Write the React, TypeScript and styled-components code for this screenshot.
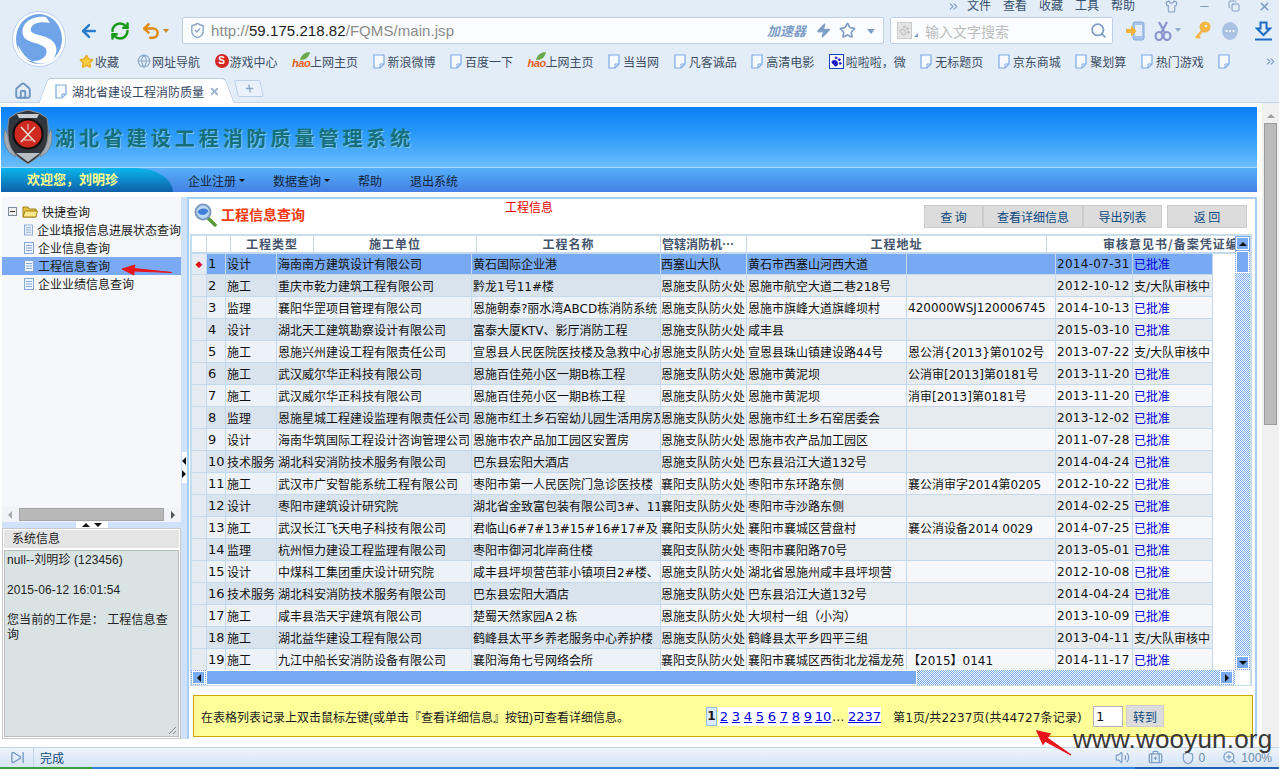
import React from 'react';
import styled, { createGlobalStyle, css } from 'styled-components';
import { ArrowLeft, RefreshCw, Undo2, Star, Globe, ShieldCheck, Zap, Search, Home, X, Plus, ChevronsRight, Shirt, Minus, Copy, Volume2, BriefcaseMedical, Shield, ZoomIn, SkipForward, PawPrint } from 'lucide-react';

const SANS = `"DejaVu Sans", "Noto Sans CJK SC", sans-serif`;
const UI = `"Liberation Sans", "Noto Sans CJK SC", sans-serif`;

const Global = createGlobalStyle`
  html, body { margin: 0; padding: 0; background: #fff; }
  body { font: 12px ${UI}; color: #222; }
  * { box-sizing: border-box; }
`;

const checker = css`
  background: repeating-conic-gradient(#78aaf3 0 25%, #fff 0 50%) 0 0 / 2px 2px;
`;

const Page = styled.div`
  position: relative;
  width: 1279px;
  height: 769px;
  overflow: hidden;
  display: flex;
  flex-direction: column;
`;

/* ---------- browser chrome ---------- */
const Chrome = styled.header`
  height: 103px;
  flex: none;
  background: #e3edf8;
  border-bottom: 1px solid #c3d4ea;
  display: flex;
  flex-direction: column;
`;
const ChromeTop = styled.div`
  height: 78px;
  display: grid;
  grid-template-columns: 72px minmax(0, 1fr);
  grid-template-rows: 17px 27px 28px;
`;
const LogoCell = styled.div`
  grid-row: 1 / 4;
  padding: 11px 0 0 12px;
`;
const MenuStrip = styled.div`
  display: flex;
  align-items: flex-start;
  justify-content: flex-end;
  color: #36506f;
  height: 17px;
  overflow: hidden;
  padding-right: 8px;
`;
const MenuText = styled.span`
  font-size: 12px;
  line-height: 12px;
  margin-right: 12px;
`;
const WinGlyph = styled.span<{ $gap: number }>`
  display: inline-flex;
  margin-left: ${p => p.$gap}px;
  color: #7f9dc2;
`;
const AddressRow = styled.div`
  display: flex;
  align-items: stretch;
`;
const NavIcons = styled.div`
  width: 110px;
  display: flex;
  align-items: center;
  padding-left: 7px;
  gap: 11px;
`;
const Caret = styled.span`
  width: 0;
  height: 0;
  border: 3px solid transparent;
  border-top: 4px solid #c9892f;
  margin: 3px 0 0 -9px;
`;
const AddressBox = styled.div`
  width: 702px;
  background: #fbfcfe;
  border: 1px solid #c0d0e4;
  border-radius: 2px;
  display: flex;
  align-items: center;
  padding: 0 8px 0 6px;
  font-family: "Liberation Sans", sans-serif;
  font-size: 15px;
  color: #8b8b8b;
`;
const Host = styled.span`
  color: #1c1c1c;
`;
const Url = styled.span`
  margin-left: 5px;
  flex: 1;
  white-space: nowrap;
  letter-spacing: 0.06px;
`;
const Accel = styled.span`
  font: italic bold 13px ${UI};
  color: #7d9ec6;
  margin-right: 10px;
`;
const AddressTail = styled.span`
  display: inline-flex;
  align-items: center;
  gap: 8px;
  color: #7d9ec6;
`;
const SmallDown = styled.span`
  width: 0;
  height: 0;
  border: 4px solid transparent;
  border-top: 5px solid #7d9ec6;
  margin: 5px 0 0 3px;
`;
const SearchBox = styled.div`
  width: 223px;
  margin-left: 6px;
  background: #fbfcfe;
  border: 1px solid #c0d0e4;
  border-radius: 2px;
  display: flex;
  align-items: center;
  padding: 0 5px 0 6px;
  color: #bcbcbc;
  font-size: 14px;
`;
const SearchThumb = styled.span`
  width: 15px;
  height: 17px;
  background: #e4e4e4;
  border: 1px solid #ccc;
  display: inline-flex;
  align-items: center;
  justify-content: center;
  color: #b5b5b5;
`;
const CornerTick = styled.span`
  width: 0;
  height: 0;
  margin: 9px 0 0 2px;
  border-left: 4px solid transparent;
  border-bottom: 4px solid #7d9ec6;
`;
const SearchHint = styled.span`
  flex: 1;
  margin-left: 7px;
`;
const ToolIcons = styled.div`
  display: flex;
  align-items: center;
  padding-left: 13px;
`;
const ToolIcon = styled.span<{ $w: number }>`
  width: ${p => p.$w}px;
  display: inline-flex;
  align-items: center;
`;
const ToolCaret = styled.span`
  width: 0;
  height: 0;
  margin: 2px 0 0 3px;
  border: 3px solid transparent;
  border-top: 4px solid #8fa9c8;
`;
const BookmarkRow = styled.nav`
  display: flex;
  align-items: center;
  padding: 6px 0 0 7px;
  gap: 14.5px;
  font-size: 12px;
  color: #3c4d63;
  white-space: nowrap;
  min-width: 0;
  overflow: hidden;
`;
const Bookmark = styled.span<{ $mr?: number }>`
  display: inline-flex;
  align-items: center;
  gap: 1px;
  margin-right: ${p => p.$mr ?? 0}px;
`;
const DocMark = styled.span`
  display: inline-flex;
  margin-right: 2px;
`;
const Hao = styled.span`
  position: relative;
  font: italic bold 11px "Liberation Sans", sans-serif;
  color: #e8601c;
  width: 17px;
  height: 14px;
  display: inline-flex;
  align-items: flex-end;
  line-height: 10px;
  letter-spacing: -0.5px;
`;
const Leaf = styled.svg`
  position: absolute;
  right: -1px;
  top: -2px;
`;
const SogouBookmark = styled.span`
  width: 14px;
  height: 14px;
  border-radius: 50%;
  background: #d22a22;
  color: #fff;
  font: bold 10px/14px "Liberation Sans", sans-serif;
  text-align: center;
`;
const BaiduIcon = styled.span`
  width: 15px;
  height: 15px;
  border: 1px solid #1a3fb8;
  background: #fff;
  color: #1c1cc8;
  display: inline-flex;
  align-items: center;
  justify-content: center;
  margin-right: 1px;
`;
const TabRow = styled.div`
  flex: 1;
  display: flex;
  align-items: flex-end;
  padding-left: 14px;
  position: relative;
`;
const HomeGlyph = styled.span`
  width: 18px;
  height: 22px;
  color: #6e97c4;
  display: inline-flex;
  align-items: center;
`;
const Tab = styled.div`
  position: relative;
  margin-left: 17px;
  width: 175px;
  height: 25px;
  background: #fff;
  border-top: 1px solid #b6cbe5;
  display: flex;
  align-items: center;
  gap: 5px;
  padding-left: 6px;
  color: #33465e;
  top: 1px;
  white-space: nowrap;
  &::before, &::after {
    content: '';
    position: absolute;
    top: -1px;
    bottom: 0;
    width: 14px;
    background: #fff;
    border-top: 1px solid #b6cbe5;
  }
  &::before { left: -6px; transform: skewX(-20deg); border-left: 1px solid #b6cbe5; border-radius: 4px 0 0 0; }
  &::after { right: -6px; transform: skewX(20deg); border-right: 1px solid #b6cbe5; border-radius: 0 4px 0 0; }
`;
const TabInner = styled.span`
  position: relative;
  z-index: 1;
  display: inline-flex;
  align-items: center;
  gap: 5px;
`;
const TabTitle = styled.span`
  width: 132px;
  overflow: hidden;
  font-size: 12px;
`;
const NewTab = styled.div`
  margin: 0 0 5px 12px;
  width: 26px;
  height: 17px;
  transform: skewX(12deg);
  border: 1px solid #bcd0e8;
  border-radius: 2px;
  background: #e9f1fa;
  color: #8fa9c8;
  display: flex;
  align-items: center;
  justify-content: center;
`;

/* ---------- application ---------- */
const Body = styled.main`
  flex: 1;
  display: flex;
  min-height: 0;
  background: #fff;
`;
const AppFrame = styled.div`
  width: 1262px;
  padding-top: 4px;
  display: flex;
  flex-direction: column;
`;
const PageScroll = styled.aside`
  width: 17px;
  background: #f0f0f0;
  display: flex;
  flex-direction: column;
  align-items: center;
  padding-top: 7px;
`;
const PageUp = styled.span`
  width: 0;
  height: 0;
  border: 4px solid transparent;
  border-bottom: 4px solid #a0a0a0;
`;
const PageThumb = styled.span`
  margin-top: 5px;
  width: 13px;
  height: 302px;
  background: #bbb;
  border: 1px solid #9c9c9c;
`;
const Banner = styled.div`
  height: 60px;
  margin: 0 5px 0 1px;
  background: linear-gradient(#0a80f8 0%, #2a9af9 45%, #6bbdfc 100%);
  display: flex;
  align-items: center;
  padding-left: 2px;
`;
const BannerTitle = styled.h1`
  margin: 0 0 0 2px;
  font: bold 20px "Noto Sans CJK SC", sans-serif;
  letter-spacing: 3.95px;
  color: #14707c;
  text-shadow: 1px 1px 0 #7cc4e8;
  white-space: nowrap;
`;
const NavBar = styled.div`
  height: 25px;
  margin: 0 5px 0 1px;
  border-top: 1px solid #a8dcff;
  background: linear-gradient(#55b0fa, #4580e4);
  display: flex;
  align-items: center;
`;
const Welcome = styled.div`
  width: 172px;
  height: 24px;
  background: linear-gradient(#0ab6ec, #0f5fa8);
  border-top-right-radius: 38px 24px;
  color: #ffff8c;
  font-weight: bold;
  font-size: 13px;
  line-height: 24px;
  padding-left: 26px;
  margin-right: 15px;
`;
const NavItem = styled.span`
  display: inline-flex;
  align-items: center;
  gap: 3px;
  margin-right: 28px;
  color: #10233c;
  font-size: 12px;
`;
const NavCaret = styled.i`
  width: 0;
  height: 0;
  border: 3px solid transparent;
  border-top: 3px solid #111;
  margin-top: 3px;
`;
const Workspace = styled.div`
  flex: 1;
  min-height: 0;
  padding: 5px 5px 8px 2px;
  display: flex;
`;
const LeftCol = styled.div`
  width: 179px;
  flex: none;
  display: flex;
  flex-direction: column;
`;
const TreePanel = styled.div`
  height: 325px;
  flex: none;
  background: #f6f7fb;
  display: flex;
  flex-direction: column;
`;
const Tree = styled.ul`
  flex: 1;
  margin: 0;
  padding: 6px 0 0;
  list-style: none;
`;
const TreeRow = styled.li<{ $selected?: boolean; $root?: boolean }>`
  height: 18px;
  display: flex;
  align-items: center;
  padding: 0 0 1px ${p => (p.$root ? 6 : 22)}px;
  gap: 4px;
  background: ${p => (p.$selected ? '#7aaaf4' : 'transparent')};
  color: #1a1a1a;
  white-space: nowrap;
  overflow: hidden;
`;
const Collapse = styled.span`
  width: 9px;
  height: 9px;
  border: 1px solid #7d8798;
  background: #f0f0f0;
  position: relative;
  margin-right: 1px;
  &::after {
    content: '';
    position: absolute;
    left: 1px;
    right: 1px;
    top: 3px;
    height: 1px;
    background: #333;
  }
`;
const LeftScroll = styled.div`
  height: 15px;
  flex: none;
  background: #f2f3f7;
  display: flex;
  align-items: center;
  padding: 0 6px;
  gap: 4px;
`;
const Tri = styled.span<{ $dir: 'l' | 'r' | 'u' | 'd'; $c?: string; $s?: number }>`
  width: 0;
  height: 0;
  flex: none;
  border: ${p => p.$s ?? 4}px solid transparent;
  ${p => {
    const c = p.$c ?? '#111';
    const s = p.$s ?? 4;
    if (p.$dir === 'l') return `border-right: ${s}px solid ${c}; border-left-width: 0;`;
    if (p.$dir === 'r') return `border-left: ${s}px solid ${c}; border-right-width: 0;`;
    if (p.$dir === 'u') return `border-bottom: ${s}px solid ${c}; border-top-width: 0;`;
    return `border-top: ${s}px solid ${c}; border-bottom-width: 0;`;
  }}
`;
const LeftThumb = styled.span`
  flex: 1;
  height: 13px;
  margin: 0 3px;
  background: #b8b8b8;
  border: 1px solid #a5a5a5;
`;
const HSplit = styled.div`
  height: 6px;
  flex: none;
  background: #d0e2fb;
  display: flex;
  justify-content: center;
`;
const HGrip = styled.span`
  width: 32px;
  background: #fff;
  display: flex;
  align-items: center;
  justify-content: center;
  gap: 4px;
`;
const InfoPanel = styled.section`
  flex: 1;
  min-height: 0;
  border: 1px solid #c8c8c8;
  padding: 1px;
  display: flex;
  flex-direction: column;
  background: #fff;
`;
const InfoHead = styled.div`
  height: 18px;
  background: #e4e4e4;
  padding-left: 8px;
  line-height: 18px;
  color: #222;
`;
const InfoBody = styled.div`
  position: relative;
  flex: 1;
  margin-top: 2px;
  background: #d9e3e4;
  border: 1px solid #bdbdbd;
  padding: 2px 2px;
  line-height: 15px;
  letter-spacing: 0.1px;
  white-space: pre-wrap;
  color: #222;
`;
const Resize = styled.svg`
  position: absolute;
  right: 1px;
  bottom: 1px;
`;
const VSplit = styled.div`
  width: 6px;
  flex: none;
  background: #d0e2fb;
  display: flex;
  align-items: flex-start;
  justify-content: center;
  padding-top: 255px;
`;
const VGrip = styled.span`
  width: 5px;
  height: 31px;
  background: #fff;
  display: flex;
  flex-direction: column;
  align-items: center;
  justify-content: center;
  gap: 5px;
`;
const MainPanel = styled.section`
  flex: 1;
  min-width: 0;
  border: 2px solid #a8cff8;
  border-bottom: 0;
  padding: 0 3px 0 1px;
  display: flex;
  flex-direction: column;
  background: #fff;
`;
const TitleRow = styled.div`
  height: 35px;
  flex: none;
  display: flex;
  padding: 4px 5px 0 4px;
`;
const LensWrap = styled.span`
  width: 26px;
  flex: none;
`;
const PageTitle = styled.h2`
  margin: 1px 0 0 1px;
  font: bold 14px "Noto Sans CJK SC", sans-serif;
  color: #f03a10;
  width: 284px;
  flex: none;
  line-height: 20px;
`;
const RedNote = styled.span`
  color: #e60000;
  font-size: 12px;
  line-height: 12px;
  flex: 1;
  margin-top: -1px;
`;
const ActionButton = styled.button<{ $w: number; $mr?: number }>`
  width: ${p => p.$w}px;
  height: 23px;
  margin-top: 2px;
  margin-right: ${p => p.$mr ?? 0}px;
  background: #dcdcdc;
  border: 1px solid #cbcbcb;
  color: #0b4a80;
  font: 12px "Noto Sans CJK SC", sans-serif;
  padding: 0;
`;
const GridWrap = styled.div`
  height: 452px;
  flex: none;
  border: 2px solid #c8dcea;
  border-bottom-width: 1px;
  display: grid;
  grid-template-columns: 1043px 15px 2px;
  grid-template-rows: 18px 416px 15px;
`;
const HeadRow = styled.div`
  grid-column: 1;
  display: grid;
  grid-template-columns: 15px 24px 83px 163px 184px 86px 300px 188px;
  overflow: hidden;
  background: #fff;
  border-bottom: 2px solid #c4d9ec;
`;
const HeadCell = styled.div<{ $left?: boolean }>`
  border-right: 1px solid #c4d9ec;
  font: bold 12px/15px "Noto Sans CJK SC", sans-serif;
  letter-spacing: ${p => (p.$left ? 0 : 1)}px;
  color: #43546c;
  text-align: ${p => (p.$left ? 'left' : 'center')};
  white-space: nowrap;
  overflow: hidden;
  padding-left: ${p => (p.$left ? 1 : 0)}px;
  &:last-child { border-right: 0; padding-left: 56px; text-align: left; }
`;
const VScroll = styled.div`
  grid-column: 2;
  grid-row: 1 / 3;
  ${checker}
  display: flex;
  flex-direction: column;
  padding: 1px;
  justify-content: space-between;
  position: relative;
`;
const ScrollBtn = styled.span`
  width: 13px;
  height: 13px;
  background: #78aaf3;
  border: 1px solid #fff;
  outline: 1px dotted #78aaf3;
  display: flex;
  flex: none;
  align-items: center;
  justify-content: center;
`;
const VThumb = styled.span`
  position: absolute;
  top: 15px;
  left: 1px;
  width: 13px;
  height: 22px;
  background: #78aaf3;
  border: 1px solid #fff;
`;
const Viewport = styled.div`
  grid-column: 1;
  grid-row: 2;
  overflow: hidden;
  background: #fff;
`;
const DataTable = styled.table`
  width: 1021px;
  table-layout: fixed;
  border-collapse: separate;
  border-spacing: 0;
  font-family: ${SANS};
  font-size: 12px;
  color: #111;
  margin-top: -1px;
`;
const Cell = styled.td<{ $bg: string; $num?: boolean; $pad?: number; $date?: boolean }>`
  height: 22px;
  padding: 0 0 0 ${p => p.$pad ?? 1}px;
  background: ${p => p.$bg};
  border-right: 1px solid #c4d9ec;
  border-bottom: 1px solid #c4d9ec;
  white-space: nowrap;
  overflow: hidden;
  font-size: ${p => (p.$num ? 13 : 12)}px;
  letter-spacing: ${p => (p.$date ? 0.3 : 0)}px;
`;
const Marker = styled.span`
  color: #e8101c;
  font-size: 9px;
  display: block;
  text-align: center;
`;
const Approved = styled.span`
  color: #0000e0;
`;
const HScroll = styled.div`
  grid-column: 1;
  grid-row: 3;
  display: flex;
  align-items: center;
  ${checker}
  padding-right: 2px;
`;
const HThumb = styled.span`
  width: 711px;
  height: 15px;
  margin-left: 1px;
  background: #78aaf3;
  border: 1px solid #fff;
  margin-right: auto;
`;
const Footer = styled.div`
  margin: 9px 0 0 3px;
  height: 42px;
  width: 1060px;
  flex: none;
  background: #ffff99;
  border: 1px solid #c8a800;
  display: flex;
  align-items: center;
  padding: 0 0 0 7px;
  font-size: 12px;
  color: #1a1a1a;
  white-space: nowrap;
`;
const Hint = styled.span`
  width: 505px;
  flex: none;
`;
const CurrentPage = styled.b`
  width: 11px;
  height: 19px;
  background: #dbeaf8;
  border: 1px solid #8fbfe6;
  text-align: center;
  font: bold 12px/17px ${SANS};
  margin-right: 1px;
`;
const PageLink = styled.a<{ $w: number }>`
  width: ${p => p.$w}px;
  height: 19px;
  background: #fff;
  color: #0000e0;
  text-decoration: underline;
  font: 13px/19px ${SANS};
  text-align: center;
`;
const Dots = styled.span`
  width: 16px;
  font: 13px/19px ${SANS};
  color: #333;
`;
const PageSummary = styled.span`
  margin-left: 12px;
  width: 200px;
  flex: none;
  letter-spacing: 0.15px;
  font-family: ${SANS};
`;
const PageInput = styled.input`
  width: 30px;
  height: 21px;
  border: 1px solid #b5b5b5;
  font: 13px ${SANS};
  padding: 0 2px;
  background: #fff;
  color: #111;
`;
const GoButton = styled.button`
  margin-left: 3px;
  width: 38px;
  height: 22px;
  background: #dcdcdc;
  border: 1px solid #cdcdcd;
  color: #0b4a80;
  font: 12px "Noto Sans CJK SC", sans-serif;
  padding: 0;
`;

/* ---------- status ---------- */
const StatusBar = styled.footer`
  height: 20px;
  flex: none;
  border-top: 1px solid #c3d4ea;
  background: linear-gradient(#edf4fc, #d6e4f5);
  display: flex;
  align-items: center;
  color: #0d4a78;
`;
const StatusLeft = styled.span`
  width: 34px;
  height: 100%;
  padding-left: 10px;
  display: flex;
  align-items: center;
  color: #6d93bd;
  border-right: 1px solid #c3d4ea;
`;
const StatusText = styled.span`
  margin-left: 6px;
  flex: 1;
`;
const StatusIcons = styled.span`
  display: flex;
  align-items: center;
  color: #7d9ec6;
  padding-right: 7px;
`;
const StatusIcon = styled.span<{ $ml: number }>`
  display: inline-flex;
  margin-left: ${p => p.$ml}px;
`;
const StatusNumber = styled.span`
  margin-left: 4px;
  color: #6f8cab;
  font-size: 12px;
`;
const Strip = styled.div`
  height: 2px;
  flex: none;
  background: linear-gradient(90deg, #3aa03a 0 92px, #2f7fdc 92px 1135px, #1c5fb0 1135px);
`;

/* ---------- overlays ---------- */
const Watermark = styled.div`
  position: absolute;
  left: 1073px;
  top: 724px;
  font: 26px/30px "Liberation Sans", sans-serif;
  color: #383838;
  letter-spacing: 0.2px;
`;
const ArrowOverlay = styled.svg`
  position: absolute;
  left: 0;
  top: 0;
  pointer-events: none;
`;

/* ---------- drawings ---------- */
const SogouLogo = () => (
  <svg width="54" height="56" viewBox="0 0 54 56">
    <ellipse cx="27" cy="28" rx="26.5" ry="27.5" fill="#fff" stroke="#b9d0ee" />
    <ellipse cx="27" cy="28" rx="23" ry="25" fill="#6fa5e8" />
    <path d="M34 6 C18 4 8 14 11 24 C14 33 30 31 34 38 C37 45 28 51 20 50 C27 54 34 53 40 49 C47 42 46 32 36 27 C28 23 17 24 19 17 C21 12 28 10 38 12 Z" fill="#fff" />
    <path d="M6 34 C10 42 14 47 20 50 C12 50 6 42 6 34Z" fill="#fff" />
  </svg>
);
const Emblem = () => (
  <svg width="50" height="56" viewBox="0 0 50 56">
    <path d="M2 20 C-1 32 3 44 13 48 L9 36Z M48 20 C51 32 47 44 37 48 L41 36Z" fill="#a4acb2" stroke="#6a7278" strokeWidth="0.6" />
    <path d="M25 1 L36 4 L44 9 C46 20 46 33 41 41 C36 48 30 52 25 55 C20 52 14 48 9 41 C4 33 4 20 6 9 L14 4Z" fill="#31363c" stroke="#8a9298" strokeWidth="1" />
    <path d="M14 5 H36 L34 9 H16Z" fill="#c8ced2" />
    <circle cx="25" cy="25" r="14.5" fill="#cf2a20" stroke="#0e0e0e" strokeWidth="2" />
    <path d="M18 18 L32 33 M32 18 L18 33" stroke="#e6dcd4" strokeWidth="1.6" />
    <path d="M25 15 V21 M21 31 H29" stroke="#e6dcd4" strokeWidth="1" />
    <path d="M13 44 H37 L25 53Z" fill="#b8bec2" />
  </svg>
);
const Lens = () => (
  <svg width="23" height="24" viewBox="0 0 23 24">
    <path d="M14 15 L21 22" stroke="#5a9a38" strokeWidth="3.5" strokeLinecap="round" />
    <circle cx="9" cy="9" r="7.5" fill="#bcd8f4" stroke="#7f9cc0" strokeWidth="2" />
    <path d="M3.5 9 C5 5 12 4 14.5 8 C12 13 6 13 3.5 9Z" fill="#3e80d8" />
  </svg>
);
const Folder = () => (
  <svg width="16" height="13" viewBox="0 0 16 13">
    <path d="M1 2 H6 L7 4 H14 V12 H1Z" fill="#e8c040" stroke="#a08018" />
    <path d="M1 12 L3 6 H15.5 L14 12Z" fill="#fbe88a" stroke="#a08018" />
  </svg>
);
const Doc = () => (
  <svg width="10" height="12" viewBox="0 0 10 12">
    <rect x="0.5" y="0.5" width="9" height="11" fill="#eef4fb" stroke="#86a8d4" />
    <path d="M2 3.5H8M2 6H8M2 8.5H8" stroke="#86a8d4" />
  </svg>
);
const PageIcon = () => (
  <svg width="12" height="15" viewBox="0 0 12 15">
    <path d="M1 1 H11 V10 L7 14 H1Z" fill="#f6f9fd" stroke="#7eaae6" strokeWidth="1.2" />
    <path d="M11 10 H7 V14" fill="none" stroke="#7eaae6" />
  </svg>
);
const PhoneSend = () => (
  <svg width="19" height="20" viewBox="0 0 19 20">
    <rect x="7" y="1" width="11" height="18" rx="2" fill="#a9c4ea" stroke="#84a8dc" />
    <rect x="9" y="4" width="7" height="11" fill="#e3edf8" />
    <path d="M0 8 H5 V4.5 L10.5 10 L5 15.5 V12 H0Z" fill="#f4b23c" />
  </svg>
);
const Shears = () => (
  <svg width="18" height="20" viewBox="0 0 18 20">
    <path d="M5 1 L11 12 M13 1 L7 12" stroke="#8a94cc" strokeWidth="2.2" />
    <ellipse cx="5" cy="15" rx="3.4" ry="4" fill="none" stroke="#8a94cc" strokeWidth="2.2" />
    <ellipse cx="13" cy="15" rx="3.4" ry="4" fill="none" stroke="#8a94cc" strokeWidth="2.2" />
  </svg>
);
const GoldKey = () => (
  <svg width="17" height="19" viewBox="0 0 17 19">
    <circle cx="11" cy="6" r="5.5" fill="#f4b648" />
    <circle cx="12" cy="5" r="1.3" fill="#e3edf8" />
    <path d="M8 10 L2 17 M3.5 15 L6 17" stroke="#f4b648" strokeWidth="2.6" />
  </svg>
);
const MoreDots = () => (
  <svg width="16" height="18" viewBox="0 0 16 18">
    <ellipse cx="8" cy="9" rx="8" ry="9" fill="#aac2e2" />
    <circle cx="4.5" cy="9" r="1.1" fill="#fff" />
    <circle cx="8" cy="9" r="1.1" fill="#fff" />
    <circle cx="11.5" cy="9" r="1.1" fill="#fff" />
  </svg>
);
const DownloadMark = () => (
  <svg width="17" height="20" viewBox="0 0 17 20">
    <path d="M5.5 1.5 H11.5 V7.5 H15 L8.5 14 L2 7.5 H5.5Z" fill="none" stroke="#1c6cc4" strokeWidth="2" />
    <path d="M0 18.5 H17" stroke="#1c6cc4" strokeWidth="2" />
  </svg>
);

const HaoIcon = () => (
  <Hao>
    hao
    <Leaf width="10" height="8" viewBox="0 0 10 8"><path d="M0 8 C1 3 5 0 10 0 C9 5 6 8 0 8Z" fill="#6aa84a" /></Leaf>
  </Hao>
);
const DocBookmark = ({ label }: { label: string }) => (
  <Bookmark><DocMark><PageIcon /></DocMark>{label}</Bookmark>
);

type Row = [string, string, string, string, string, string, string, boolean];
const rows: Row[] = [
  ['设计', '海南南方建筑设计有限公司', '黄石国际企业港', '西塞山大队', '黄石市西塞山河西大道', '', '2014-07-31', true],
  ['施工', '重庆市乾力建筑工程有限公司', '黔龙1号11#楼', '恩施支队防火处', '恩施市航空大道二巷218号', '', '2012-10-12', false],
  ['监理', '襄阳华罡项目管理有限公司', '恩施朝泰?丽水湾ABCD栋消防系统', '恩施支队防火处', '恩施市旗峰大道旗峰坝村', '420000WSJ120006745', '2014-10-13', true],
  ['设计', '湖北天工建筑勘察设计有限公司', '富泰大厦KTV、影厅消防工程', '恩施支队防火处', '咸丰县', '', '2015-03-10', true],
  ['施工', '恩施兴州建设工程有限责任公司', '宣恩县人民医院医技楼及急救中心扩', '恩施支队防火处', '宣恩县珠山镇建设路44号', '恩公消{2013}第0102号', '2013-07-22', false],
  ['施工', '武汉威尔华正科技有限公司', '恩施百佳苑小区一期B栋工程', '恩施支队防火处', '恩施市黄泥坝', '公消审[2013]第0181号', '2013-11-20', true],
  ['施工', '武汉威尔华正科技有限公司', '恩施百佳苑小区一期B栋工程', '恩施支队防火处', '恩施市黄泥坝', '消审[2013]第0181号', '2013-11-20', true],
  ['监理', '恩施星城工程建设监理有限责任公司', '恩施市红土乡石窑幼儿园生活用房及', '恩施支队防火处', '恩施市红土乡石窑居委会', '', '2013-12-02', true],
  ['设计', '海南华筑国际工程设计咨询管理公司', '恩施市农产品加工园区安置房', '恩施支队防火处', '恩施市农产品加工园区', '', '2011-07-28', true],
  ['技术服务', '湖北科安消防技术服务有限公司', '巴东县宏阳大酒店', '恩施支队防火处', '巴东县沿江大道132号', '', '2014-04-24', true],
  ['施工', '武汉市广安智能系统工程有限公司', '枣阳市第一人民医院门急诊医技楼', '襄阳支队防火处', '枣阳市东环路东侧', '襄公消审字2014第0205', '2012-10-22', true],
  ['设计', '枣阳市建筑设计研究院', '湖北省金致富包装有限公司3#、11#', '襄阳支队防火处', '枣阳市寺沙路东侧', '', '2014-02-25', true],
  ['施工', '武汉长江飞天电子科技有限公司', '君临山6#7#13#15#16#17#及', '襄阳支队防火处', '襄阳市襄城区营盘村', '襄公消设备2014 0029', '2014-07-25', true],
  ['监理', '杭州恒力建设工程监理有限公司', '枣阳市御河北岸商住楼', '襄阳支队防火处', '枣阳市襄阳路70号', '', '2013-05-01', true],
  ['设计', '中煤科工集团重庆设计研究院', '咸丰县坪坝营芭菲小镇项目2#楼、', '恩施支队防火处', '湖北省恩施州咸丰县坪坝营', '', '2012-10-08', true],
  ['技术服务', '湖北科安消防技术服务有限公司', '巴东县宏阳大酒店', '恩施支队防火处', '巴东县沿江大道132号', '', '2014-04-24', true],
  ['施工', '咸丰县浩天宇建筑有限公司', '楚蜀天然家园A２栋', '恩施支队防火处', '大坝村一组（小沟）', '', '2013-10-09', true],
  ['施工', '湖北益华建设工程有限公司', '鹤峰县太平乡养老服务中心养护楼', '恩施支队防火处', '鹤峰县太平乡四平三组', '', '2013-04-11', false],
  ['施工', '九江中船长安消防设备有限公司', '襄阳海角七号网络会所', '襄阳支队防火处', '襄阳市襄城区西街北龙福龙苑', '【2015】0141', '2014-11-17', true],
];

const colWidths = [15, 19, 51, 195, 189, 86, 160, 149, 77, 80];

export default function App() {
  return (
    <Page>
      <Global />
      <Chrome>
        <ChromeTop>
          <LogoCell><SogouLogo /></LogoCell>
          <MenuStrip>
            <WinGlyph $gap={0}><ChevronsRight size={13} /></WinGlyph>
            <MenuText>&nbsp;&nbsp;文件</MenuText>
            <MenuText>查看</MenuText>
            <MenuText>收藏</MenuText>
            <MenuText>工具</MenuText>
            <MenuText>帮助</MenuText>
            <WinGlyph $gap={18}><Shirt size={13} /></WinGlyph>
            <WinGlyph $gap={20}><Minus size={13} /></WinGlyph>
            <WinGlyph $gap={17}><Copy size={12} /></WinGlyph>
            <WinGlyph $gap={18}><X size={13} strokeWidth={3} /></WinGlyph>
          </MenuStrip>
          <AddressRow>
            <NavIcons>
              <ArrowLeft size={20} color="#2a7cc8" strokeWidth={3} />
              <RefreshCw size={20} color="#169a16" strokeWidth={3} />
              <Undo2 size={20} color="#e08a10" strokeWidth={3} />
              <Caret />
            </NavIcons>
            <AddressBox>
              <ShieldCheck size={17} color="#8aa4c4" />
              <Url>http://<Host>59.175.218.82</Host>/FQMS/main.jsp</Url>
              <Accel>加速器</Accel>
              <AddressTail>
                <Zap size={15} fill="#7d9ec6" />
                <Star size={17} strokeWidth={2.4} />
                <SmallDown />
              </AddressTail>
            </AddressBox>
            <SearchBox>
              <SearchThumb><PawPrint size={11} /></SearchThumb>
              <CornerTick />
              <SearchHint>输入文字搜索</SearchHint>
              <Search size={17} color="#7d9ec6" strokeWidth={2.5} />
            </SearchBox>
            <ToolIcons>
              <ToolIcon $w={28}><PhoneSend /></ToolIcon>
              <ToolIcon $w={40}><Shears /><ToolCaret /></ToolIcon>
              <ToolIcon $w={28}><GoldKey /></ToolIcon>
              <ToolIcon $w={33}><MoreDots /></ToolIcon>
              <ToolIcon $w={18}><DownloadMark /></ToolIcon>
            </ToolIcons>
          </AddressRow>
          <BookmarkRow>
            <Bookmark $mr={3.5}><Star size={15} color="#e8a820" fill="#f8cc40" />收藏</Bookmark>
            <Bookmark><Globe size={14} color="#8aa8c8" />网址导航</Bookmark>
            <Bookmark><SogouBookmark>S</SogouBookmark>游戏中心</Bookmark>
            <Bookmark><HaoIcon />上网主页</Bookmark>
            <DocBookmark label="新浪微博" />
            <DocBookmark label="百度一下" />
            <Bookmark><HaoIcon />上网主页</Bookmark>
            <DocBookmark label="当当网" />
            <DocBookmark label="凡客诚品" />
            <DocBookmark label="高清电影" />
            <Bookmark><BaiduIcon><PawPrint size={11} fill="#1c1cc8" /></BaiduIcon>啦啦啦，微</Bookmark>
            <DocBookmark label="无标题页" />
            <DocBookmark label="京东商城" />
            <DocBookmark label="聚划算" />
            <DocBookmark label="热门游戏" />
            <DocBookmark label="" />
            <WinGlyph $gap={17}><ChevronsRight size={13} /></WinGlyph>
          </BookmarkRow>
        </ChromeTop>
        <TabRow>
          <HomeGlyph><Home size={18} strokeWidth={2.6} /></HomeGlyph>
          <Tab>
            <TabInner>
              <PageIcon />
              <TabTitle>湖北省建设工程消防质量管理系统</TabTitle>
              <X size={11} color="#9db4d0" strokeWidth={4} />
            </TabInner>
          </Tab>
          <NewTab><Plus size={11} strokeWidth={3} /></NewTab>
        </TabRow>
      </Chrome>

      <Body>
        <AppFrame>
          <Banner>
            <Emblem />
            <BannerTitle>湖北省建设工程消防质量管理系统</BannerTitle>
          </Banner>
          <NavBar>
            <Welcome>欢迎您，刘明珍</Welcome>
            <NavItem>企业注册<NavCaret /></NavItem>
            <NavItem>数据查询<NavCaret /></NavItem>
            <NavItem>帮助</NavItem>
            <NavItem>退出系统</NavItem>
          </NavBar>
          <Workspace>
            <LeftCol>
              <TreePanel>
                <Tree>
                  <TreeRow $root><Collapse /><Folder />快捷查询</TreeRow>
                  <TreeRow><Doc />企业填报信息进展状态查询</TreeRow>
                  <TreeRow><Doc />企业信息查询</TreeRow>
                  <TreeRow $selected><Doc />工程信息查询</TreeRow>
                  <TreeRow><Doc />企业业绩信息查询</TreeRow>
                </Tree>
                <LeftScroll>
                  <Tri $dir="l" $c="#a8a8a8" />
                  <LeftThumb />
                  <Tri $dir="r" $c="#555" />
                </LeftScroll>
              </TreePanel>
              <HSplit>
                <HGrip><Tri $dir="u" /><Tri $dir="d" /></HGrip>
              </HSplit>
              <InfoPanel>
                <InfoHead>系统信息</InfoHead>
                <InfoBody>
                  {'null--刘明珍 (123456)\n\n2015-06-12 16:01:54\n\n您当前的工作是： 工程信息查询'}
                  <Resize width="9" height="9" viewBox="0 0 9 9"><path d="M8 1 L1 8 M8 5 L5 8" stroke="#888" /></Resize>
                </InfoBody>
              </InfoPanel>
            </LeftCol>
            <VSplit>
              <VGrip><Tri $dir="l" /><Tri $dir="r" /></VGrip>
            </VSplit>
            <MainPanel>
              <TitleRow>
                <LensWrap><Lens /></LensWrap>
                <PageTitle>工程信息查询</PageTitle>
                <RedNote>工程信息</RedNote>
                <ActionButton $w={59}>查 询</ActionButton>
                <ActionButton $w={100}>查看详细信息</ActionButton>
                <ActionButton $w={79} $mr={5}>导出列表</ActionButton>
                <ActionButton $w={80}>返 回</ActionButton>
              </TitleRow>
              <GridWrap>
                <HeadRow>
                  <HeadCell />
                  <HeadCell />
                  <HeadCell>工程类型</HeadCell>
                  <HeadCell>施工单位</HeadCell>
                  <HeadCell>工程名称</HeadCell>
                  <HeadCell $left>管辖消防机…</HeadCell>
                  <HeadCell>工程地址</HeadCell>
                  <HeadCell>审核意见书/备案凭证编号</HeadCell>
                </HeadRow>
                <VScroll>
                  <ScrollBtn><Tri $dir="u" /></ScrollBtn>
                  <VThumb />
                  <ScrollBtn><Tri $dir="d" /></ScrollBtn>
                </VScroll>
                <Viewport>
                  <DataTable>
                    <colgroup>
                      {colWidths.map((w, i) => <col key={i} width={w} />)}
                    </colgroup>
                    <tbody>
                      {rows.map((r, i) => {
                        const sel = i === 0;
                        const dark = i % 2 === 1;
                        const a = sel ? '#78aaf4' : dark ? '#d9e3ed' : '#edf2f8';
                        const b = sel ? '#78aaf4' : dark ? '#e6ebf0' : '#f5f7fa';
                        return (
                          <tr key={i}>
                            <Cell $bg="#e4ebf3" $pad={0}>{sel && <Marker>◆</Marker>}</Cell>
                            <Cell $bg={a} $num>{i + 1}</Cell>
                            <Cell $bg={a}>{r[0]}</Cell>
                            <Cell $bg={a}>{r[1]}</Cell>
                            <Cell $bg={a}>{r[2]}</Cell>
                            <Cell $bg={b} $pad={0}>{r[3]}</Cell>
                            <Cell $bg={b} $pad={1}>{r[4]}</Cell>
                            <Cell $bg={b}>{r[5]}</Cell>
                            <Cell $bg={b} $date>{r[6]}</Cell>
                            <Cell $bg={b}>{r[7] ? <Approved>已批准</Approved> : '支/大队审核中'}</Cell>
                          </tr>
                        );
                      })}
                    </tbody>
                  </DataTable>
                </Viewport>
                <HScroll>
                  <ScrollBtn><Tri $dir="l" /></ScrollBtn>
                  <HThumb />
                  <ScrollBtn><Tri $dir="r" /></ScrollBtn>
                </HScroll>
              </GridWrap>
              <Footer>
                <Hint>在表格列表记录上双击鼠标左键(或单击『查看详细信息』按钮)可查看详细信息。</Hint>
                <CurrentPage>1</CurrentPage>
                {[2, 3, 4, 5, 6, 7, 8, 9].map(n => <PageLink key={n} $w={12}>{n}</PageLink>)}
                <PageLink $w={18}>10</PageLink>
                <Dots>...</Dots>
                <PageLink $w={33}>2237</PageLink>
                <PageSummary>第1页/共2237页(共44727条记录)</PageSummary>
                <PageInput defaultValue="1" />
                <GoButton>转到</GoButton>
              </Footer>
            </MainPanel>
          </Workspace>
        </AppFrame>
        <PageScroll>
          <PageUp />
          <PageThumb />
        </PageScroll>
      </Body>

      <StatusBar>
        <StatusLeft><SkipForward size={15} /></StatusLeft>
        <StatusText>完成</StatusText>
        <StatusIcons>
          <StatusIcon $ml={0}><Volume2 size={15} /></StatusIcon>
          <StatusIcon $ml={18}><BriefcaseMedical size={15} /></StatusIcon>
          <StatusIcon $ml={18}><Shield size={14} /></StatusIcon>
          <StatusNumber>0</StatusNumber>
          <StatusIcon $ml={17}><ZoomIn size={15} /></StatusIcon>
          <StatusNumber>100%</StatusNumber>
        </StatusIcons>
      </StatusBar>
      <Strip />

      <Watermark>www.wooyun.org</Watermark>
      <ArrowOverlay width="1279" height="769" viewBox="0 0 1279 769">
        <path d="M172 272.5 L134 268.5 L135 265 L122 269 L134 275 L134 271Z" fill="#e8161c" stroke="#e8161c" strokeWidth="1" />
        <path d="M1071 755 L1047 738 L1050 734 L1037 731 L1043 744 L1045 741Z" fill="#e8161c" stroke="#e8161c" strokeWidth="1.4" />
      </ArrowOverlay>
    </Page>
  );
}
